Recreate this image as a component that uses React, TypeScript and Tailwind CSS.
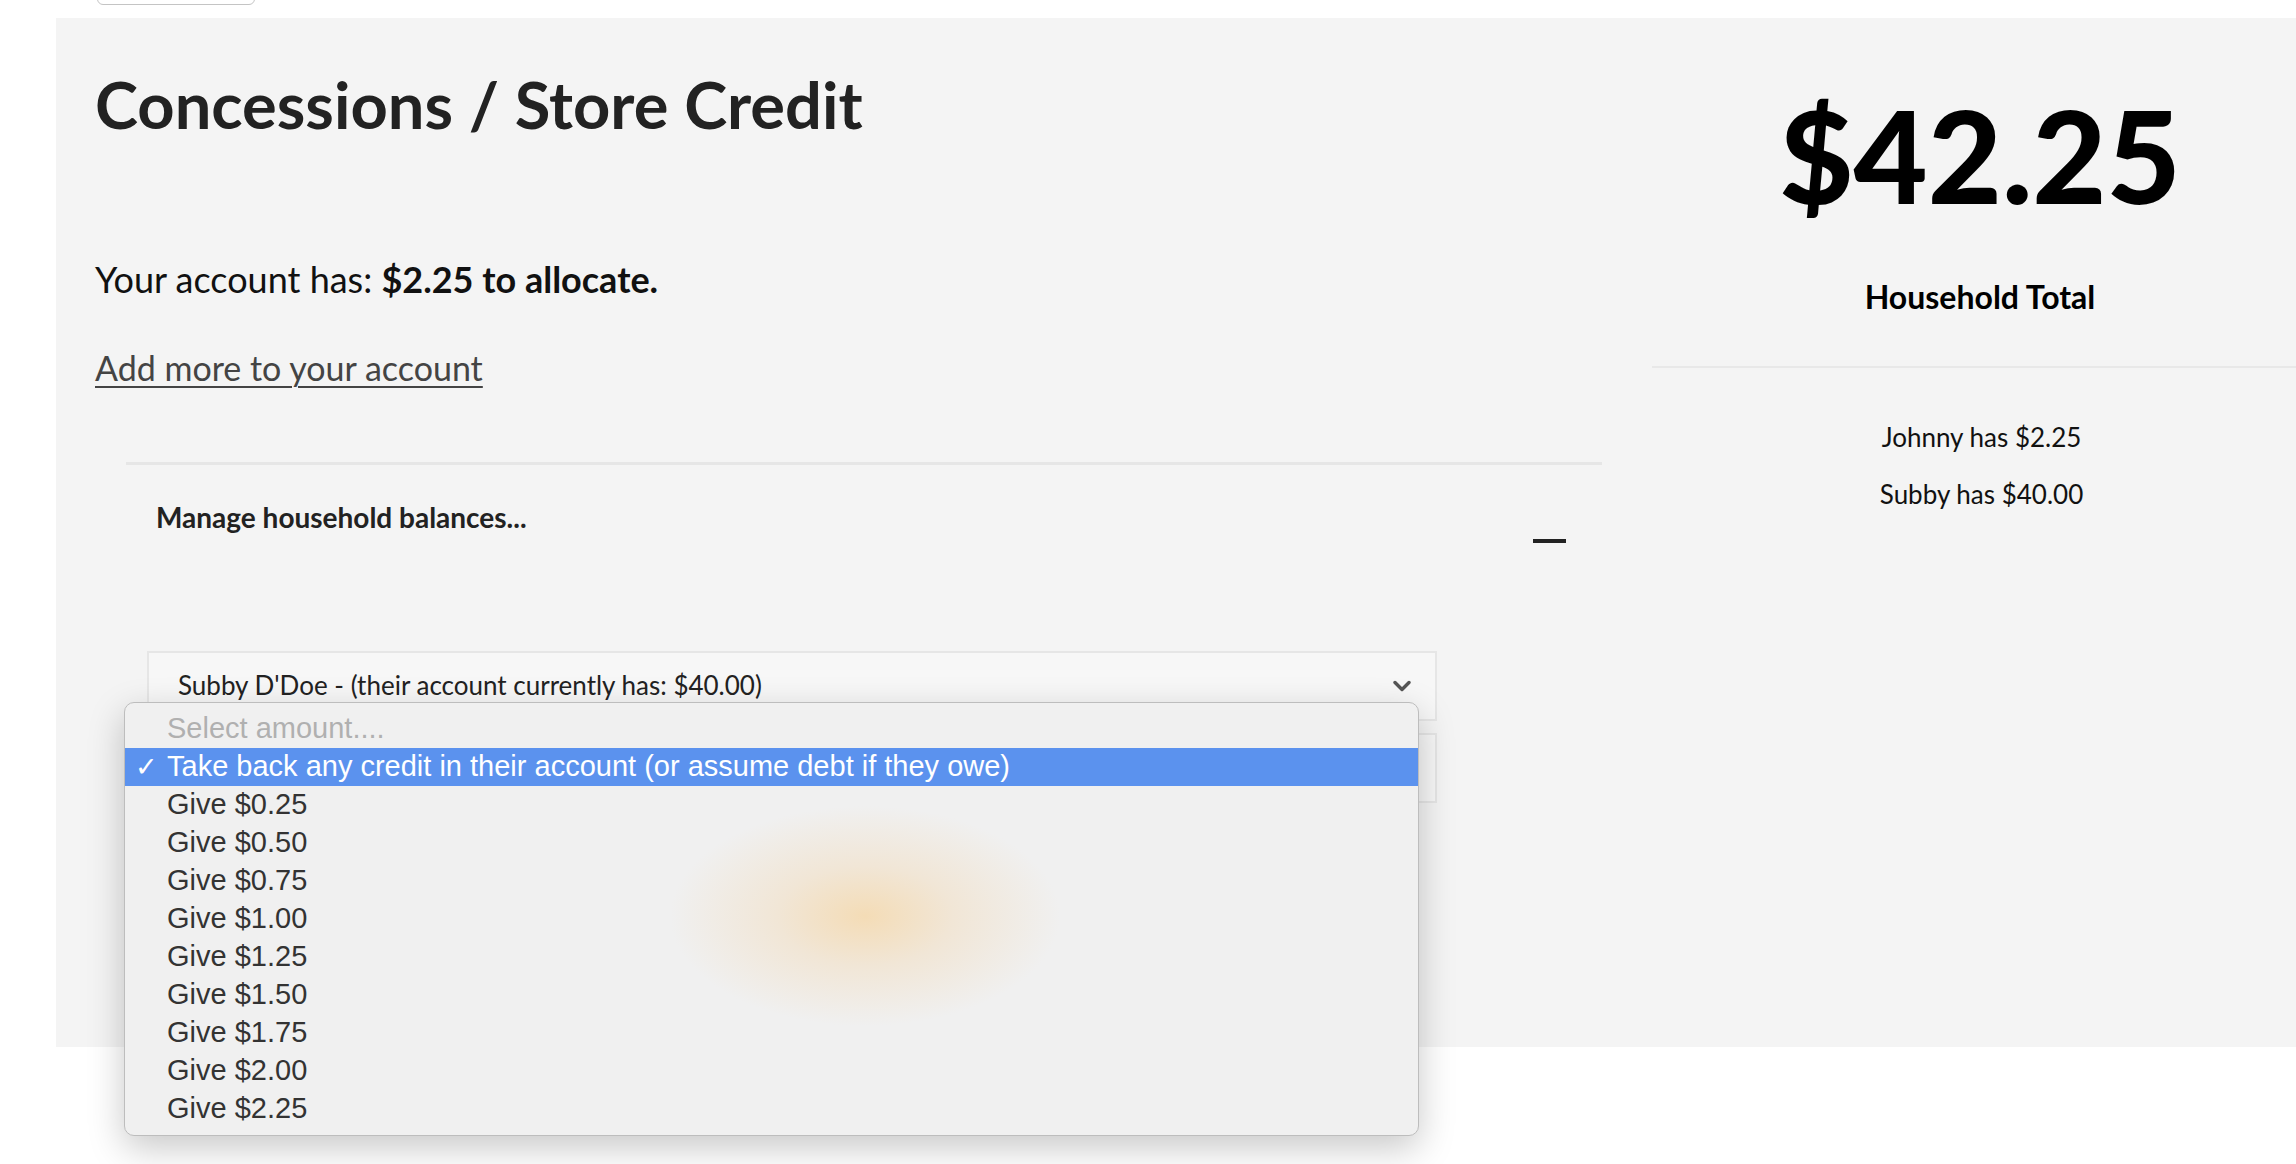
import React from "react";

const amounts = ["0.25", "0.50", "0.75", "1.00", "1.25", "1.50", "1.75", "2.00", "2.25"];

function Chevron() {
  return (
    <svg width="18" height="12" viewBox="0 0 18 12" fill="none">
      <path d="M2 2.5 L9 9.5 L16 2.5" stroke="#555" strokeWidth="3.4" strokeLinecap="round" strokeLinejoin="round" />
    </svg>
  );
}

function AmountMenu() {
  return (
    <div className="absolute left-[124px] top-[702px] w-[1295px] h-[434px] rounded-[10px] border border-[#bdbdbd] bg-[#f0f0f0] bg-[radial-gradient(195px_110px_at_740px_213px,#f4dcb6_0%,#f1e6d6_45%,#f0f0f0_100%)] shadow-[0_12px_36px_rgba(0,0,0,0.22)] py-[7px] font-['Liberation_Sans',Arial,sans-serif] text-[29px] text-[#333]">
      <div className="h-[38px] flex items-center pl-[42px] text-[#b0b0b0]">Select amount....</div>
      <div className="h-[38px] flex items-center bg-[#5b92ee] text-white">
        <span className="w-[42px] pl-[10px] font-['DejaVu_Sans',sans-serif] text-[27px]">✓</span>
        <span>Take back any credit in their account (or assume debt if they owe)</span>
      </div>
      {amounts.map((a) => (
        <div key={a} className="h-[38px] flex items-center pl-[42px]">
          Give ${a}
        </div>
      ))}
    </div>
  );
}

export default function App() {
  return (
    <div className="relative min-h-screen bg-white font-['Lato',sans-serif] overflow-hidden">
      {/* top button peeking in */}
      <div className="h-[18px] flex items-end">
        <div className="ml-[97px] mb-[13px] w-[158px] h-[40px] shrink-0 rounded-[6px] border border-[#c4c4c4] bg-white" />
      </div>

      <div className="ml-[56px] h-[1029px] bg-[#f4f4f4] flex">
        {/* left column */}
        <div className="w-[1594px] shrink-0">
          <h1 className="pl-[39px] pt-[47px] text-[65px] leading-[1.2] font-bold text-[#222]">
            Concessions / Store Credit
          </h1>
          <p className="pl-[39px] mt-[115px] text-[36px] leading-[1.2] text-[#111]">
            Your account has: <span className="font-bold">$2.25 to allocate.</span>
          </p>
          <p className="pl-[39px] mt-[47px] text-[34px] leading-[1.2]">
            <a href="#" className="text-[#444] underline underline-offset-[5px] decoration-[2px]">
              Add more to your account
            </a>
          </p>

          <div className="ml-[70px] w-[1476px] mt-[73px] border-t-[3px] border-[#e6e6e6]">
            <div className="flex justify-between pl-[30px] pr-[36px] pt-[36px]">
              <span className="text-[28px] leading-[1.2] font-bold text-[#222]">Manage household balances...</span>
              <span className="mt-[38px] w-[33px] h-[4px] bg-[#222]" />
            </div>

            <div className="ml-[21px] mt-[108px] w-[1290px] flex flex-col gap-[12px]">
              <div className="h-[70px] flex items-center justify-between border-2 border-[#e6e6e6] bg-[#f7f7f7] pl-[29px] pr-[24px]">
                <span className="text-[26px] text-[#222]">Subby D'Doe - (their account currently has: $40.00)</span>
                <Chevron />
              </div>
              <div className="h-[70px] flex items-center justify-between border-2 border-[#e6e6e6] bg-[#f7f7f7] pl-[29px] pr-[24px]">
                <span className="text-[26px] text-[#222]">Take back any credit in their account (or assume debt if they owe)</span>
                <Chevron />
              </div>
            </div>
          </div>
        </div>

        {/* right column */}
        <div className="flex-1 flex flex-col">
          <div className="pl-[14px] text-center">
            <div className="pt-[60px] text-[128px] leading-[1.2] font-black text-black">$42.25</div>
            <div className="mt-[46px] text-[32px] leading-[1.2] font-bold text-black">Household Total</div>
          </div>
          <div className="mt-[50px] ml-[2px] border-t-2 border-[#e8e8e8]" />
          <div className="pl-[17px] text-center text-[26px] leading-[1.2] text-[#111]">
            <p className="mt-[54px]">Johnny has $2.25</p>
            <p className="mt-[26px]">Subby has $40.00</p>
          </div>
        </div>
      </div>

      <AmountMenu />
    </div>
  );
}
